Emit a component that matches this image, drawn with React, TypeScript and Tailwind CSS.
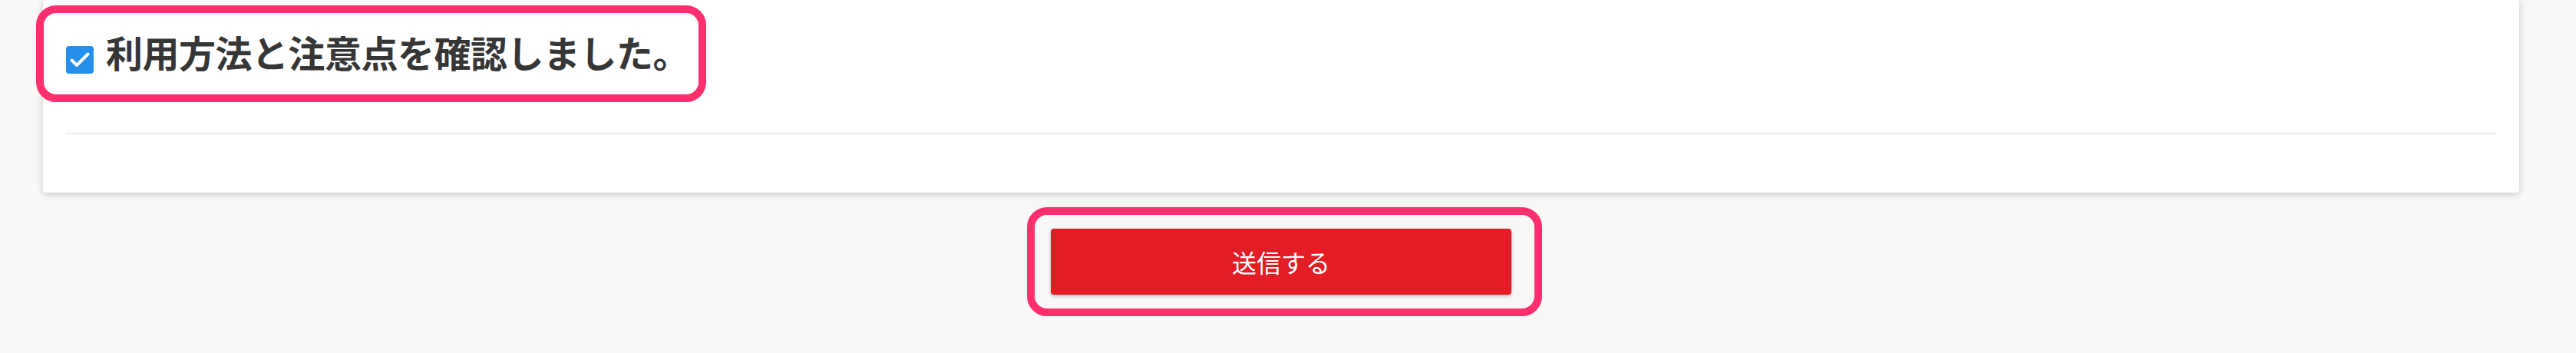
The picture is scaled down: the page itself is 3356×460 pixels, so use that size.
function CheckMark() {
  return (
    <span className="mt-[17px] flex h-[36px] w-[36px] shrink-0 items-center justify-center rounded-[4px] bg-[#2590ec]">
      <svg width="36" height="36" viewBox="0 0 36 36" fill="none">
        <path d="M7.5 18.5 L14 25 L28.5 10.5" stroke="#fff" strokeWidth="4" strokeLinecap="round" strokeLinejoin="round" />
      </svg>
    </span>
  );
}

function Highlight({ className }: { className: string }) {
  return <div className={`pointer-events-none absolute rounded-[26px] border-[10px] border-[#ff2e6c] ${className}`} />;
}

export default function App() {
  return (
    <div className="h-[460px] overflow-hidden bg-[#f8f8f6] font-['Noto_Sans_CJK_JP','Noto_Sans',sans-serif]">
      <div className="ml-[56px] mr-[74px]">
        <section className="rounded-b-[4px] bg-white px-[30px] pb-[76px] shadow-[0_2px_10px_rgba(0,0,0,0.2)]">
          <label className="relative flex h-[173px] items-start pt-[43px]">
            <CheckMark />
            <span className="ml-[16px] text-[48px] font-bold leading-none tracking-[-0.5px] text-[#363636]">
              利用方法と注意点を確認しました。
            </span>
            <Highlight className="-left-[39px] top-[7px] h-[126px] w-[873px]" />
          </label>
          <div className="h-[2px] bg-[#eeeeee]" />
        </section>

        <div className="flex justify-center pt-[47px]">
          <div className="relative">
            <button
              type="button"
              className="flex h-[86px] w-[600px] items-center justify-center rounded-[4px] bg-[#e31d25] text-[32px] text-white shadow-[0_2px_4px_rgba(0,0,0,0.25)]"
            >
              送信する
            </button>
            <Highlight className="-left-[31px] -top-[28px] h-[142px] w-[671px]" />
          </div>
        </div>
      </div>
    </div>
  );
}
